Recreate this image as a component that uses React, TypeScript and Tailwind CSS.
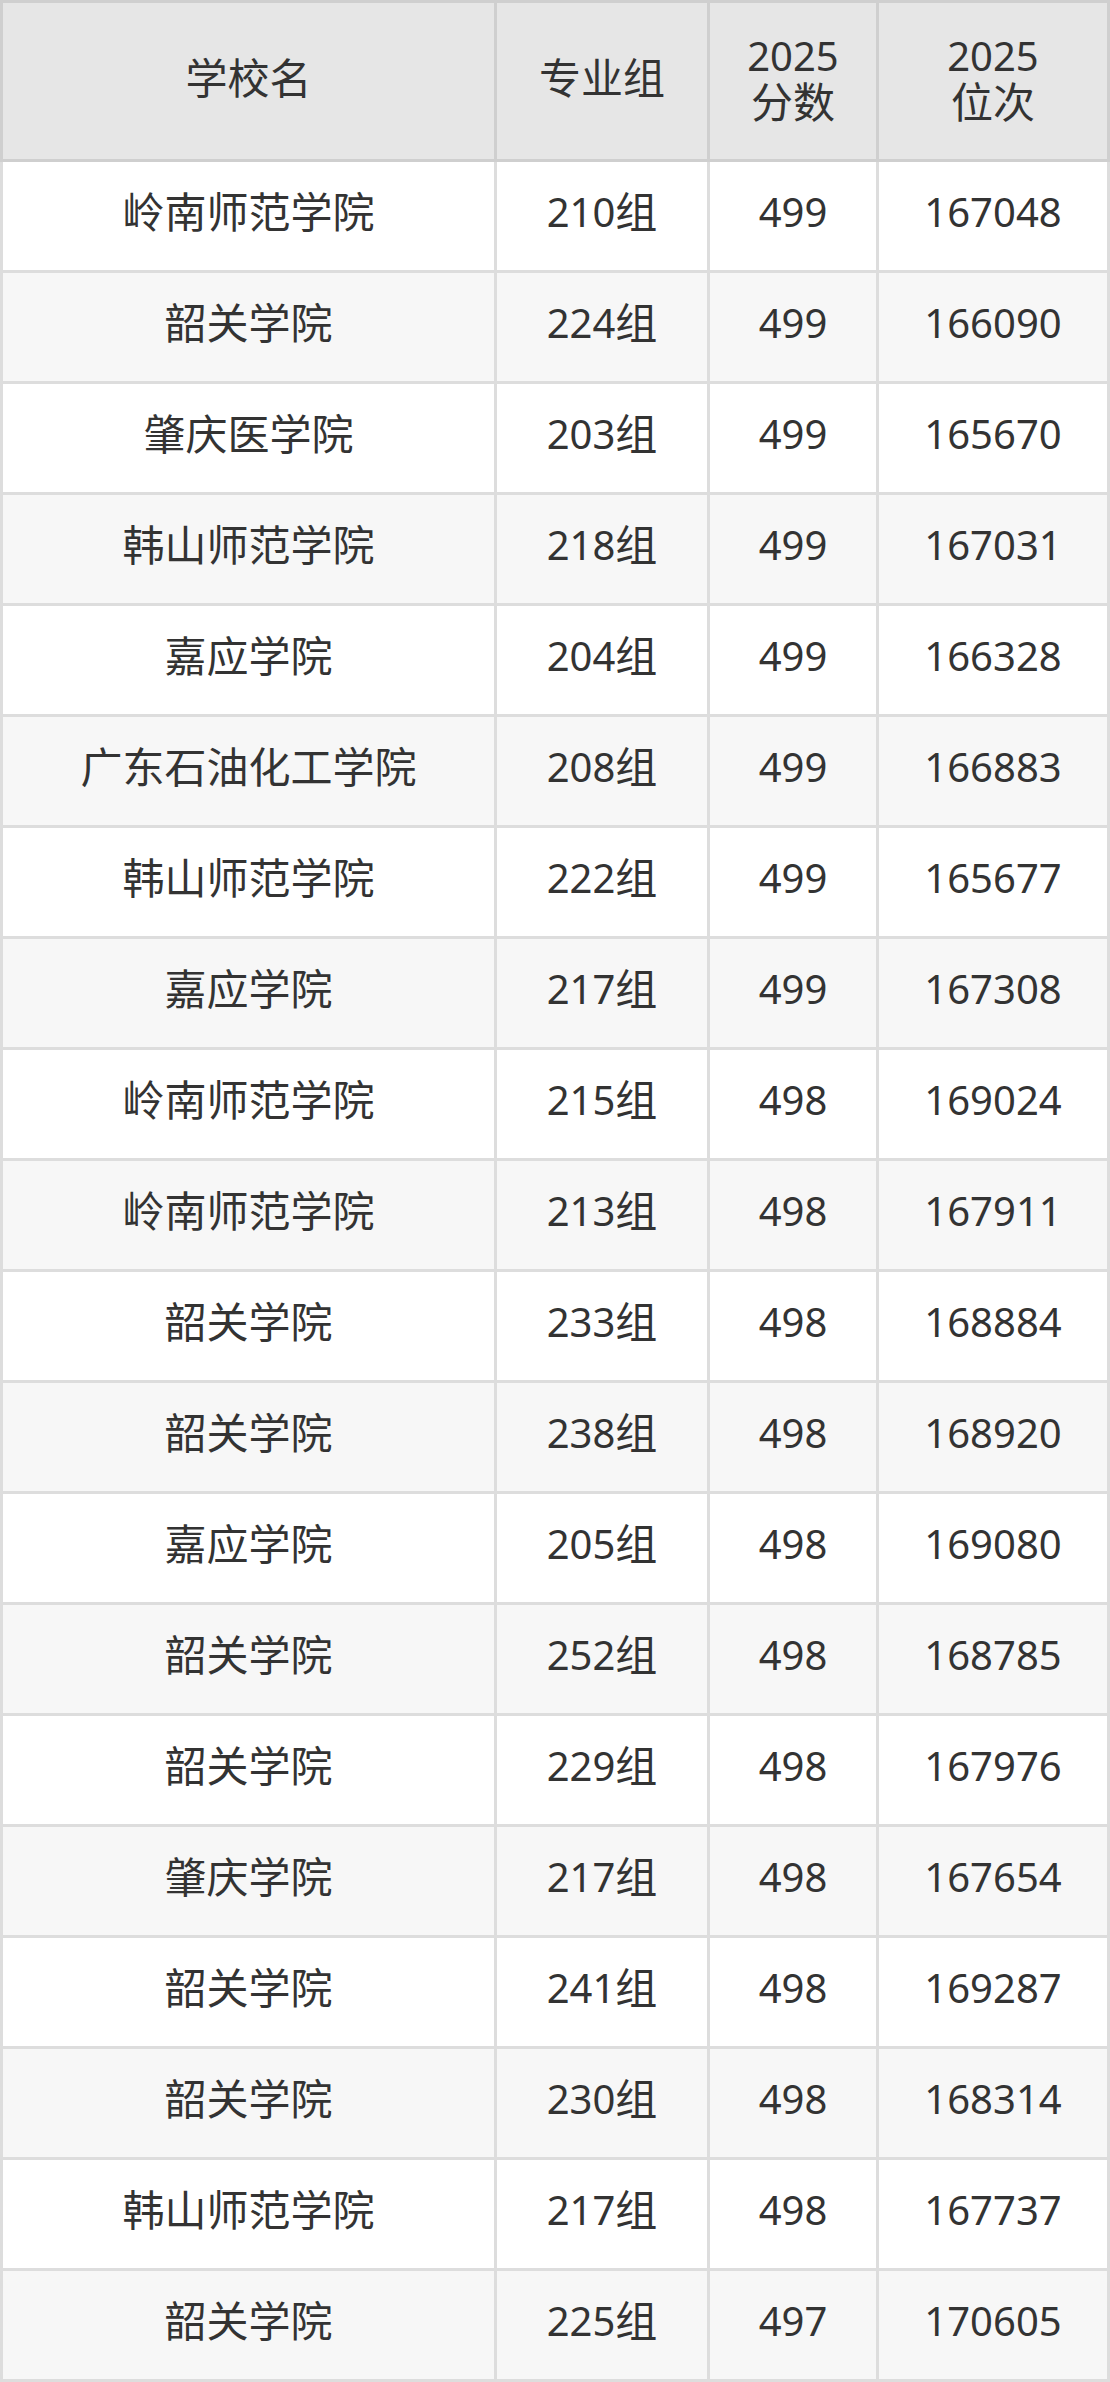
import React from "react";

const rows: [string, string, string, string][] = [
  ["岭南师范学院", "210", "499", "167048"],
  ["韶关学院", "224", "499", "166090"],
  ["肇庆医学院", "203", "499", "165670"],
  ["韩山师范学院", "218", "499", "167031"],
  ["嘉应学院", "204", "499", "166328"],
  ["广东石油化工学院", "208", "499", "166883"],
  ["韩山师范学院", "222", "499", "165677"],
  ["嘉应学院", "217", "499", "167308"],
  ["岭南师范学院", "215", "498", "169024"],
  ["岭南师范学院", "213", "498", "167911"],
  ["韶关学院", "233", "498", "168884"],
  ["韶关学院", "238", "498", "168920"],
  ["嘉应学院", "205", "498", "169080"],
  ["韶关学院", "252", "498", "168785"],
  ["韶关学院", "229", "498", "167976"],
  ["肇庆学院", "217", "498", "167654"],
  ["韶关学院", "241", "498", "169287"],
  ["韶关学院", "230", "498", "168314"],
  ["韩山师范学院", "217", "498", "167737"],
  ["韶关学院", "225", "497", "170605"],
];

export default function App() {
  return (
    <div
      className="w-[1110px] text-[#333333] text-[42px] leading-[46px]"
      style={{ fontFamily: '"Noto Sans", "Noto Sans CJK SC", sans-serif' }}
    >
      <div className="bg-[#cfcfcf] p-[3px]">
        <div className="grid grid-cols-[491px_210px_166px_228px] gap-x-[3px]">
          <div className="h-[156px] bg-[#e6e6e6] flex items-center justify-center text-center pb-[6px]">学校名</div>
          <div className="h-[156px] bg-[#e6e6e6] flex items-center justify-center text-center pb-[6px]">专业组</div>
          <div className="h-[156px] bg-[#e6e6e6] flex flex-col items-center justify-center text-center pb-[4px]">
            <span className="text-[40px]">2025</span>
            <span>分数</span>
          </div>
          <div className="h-[156px] bg-[#e6e6e6] flex flex-col items-center justify-center text-center pb-[4px]">
            <span className="text-[40px]">2025</span>
            <span>位次</span>
          </div>
        </div>
      </div>
      <div className="bg-[#dddddd] px-[3px] pb-[3px]">
        <div className="grid grid-cols-[491px_210px_166px_228px] gap-[3px]">
          {rows.map((r, i) => {
            const bg = i % 2 === 0 ? "bg-white" : "bg-[#f7f7f7]";
            return (
              <React.Fragment key={i}>
                <div className={`h-[108px] ${bg} flex items-center justify-center text-center pb-[8px]`}>{r[0]}</div>
                <div className={`h-[108px] ${bg} flex items-center justify-center text-center pb-[8px]`}>
                  <span className="text-[40px]">{r[1]}</span>
                  <span>组</span>
                </div>
                <div className={`h-[108px] ${bg} flex items-center justify-center text-center pb-[8px] text-[40px]`}>{r[2]}</div>
                <div className={`h-[108px] ${bg} flex items-center justify-center text-center pb-[8px] text-[40px]`}>{r[3]}</div>
              </React.Fragment>
            );
          })}
        </div>
      </div>
    </div>
  );
}
